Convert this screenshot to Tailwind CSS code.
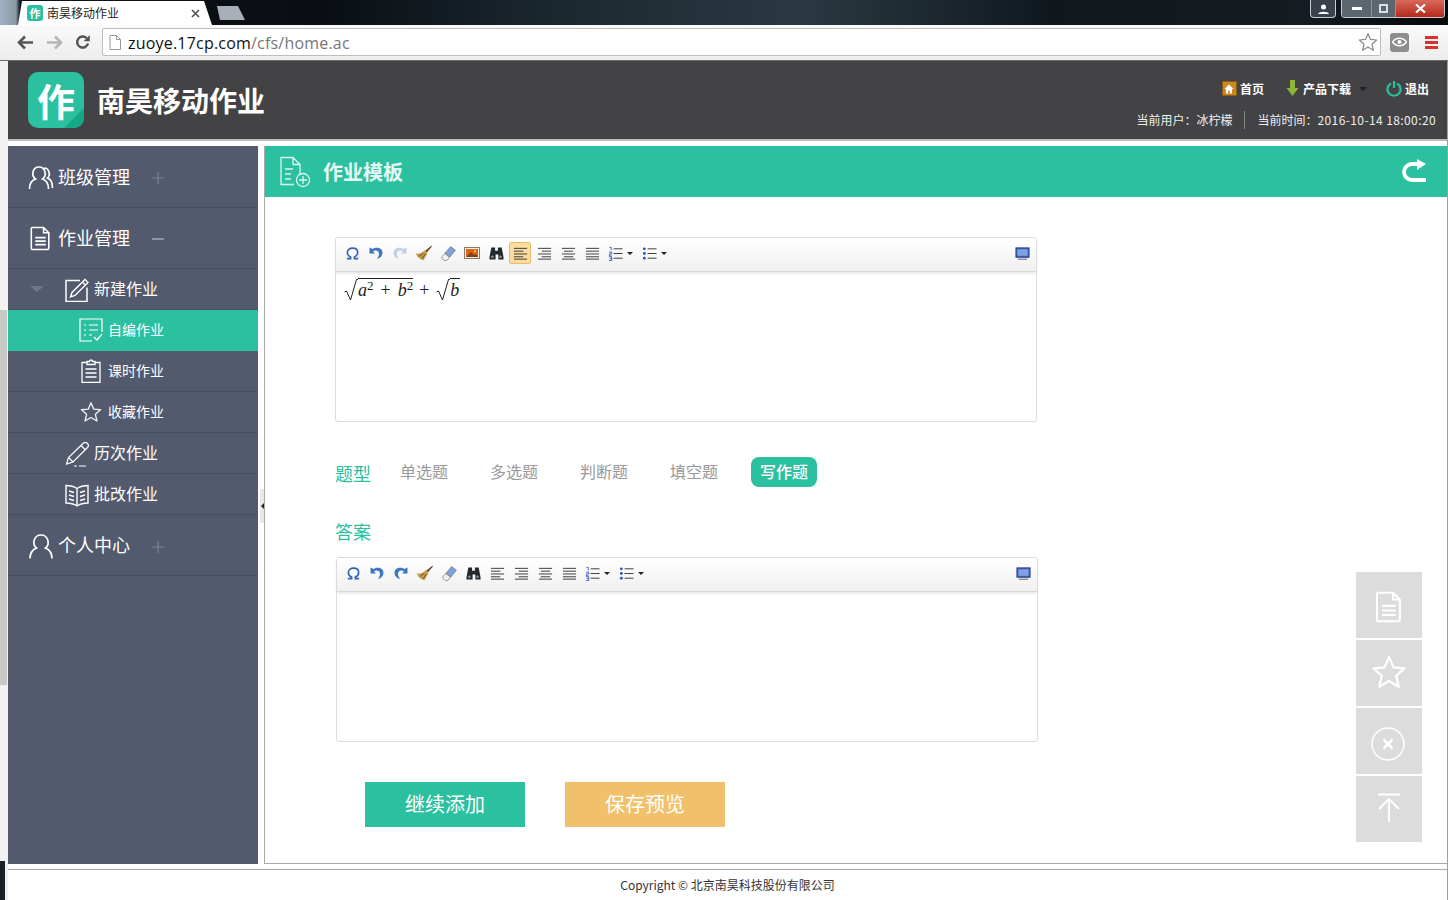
<!DOCTYPE html>
<html lang="zh-CN">
<head>
  <meta charset="UTF-8" />
  <meta name="viewport" content="width=device-width, initial-scale=1" />
  <title>南昊移动作业</title>
  <script src="https://cdn.jsdelivr.net/npm/@tailwindcss/browser@4"></script>
</head>
<body class="relative w-[1448px] h-[900px] overflow-hidden bg-white font-['Noto_Sans_CJK_SC','Noto_Sans',sans-serif]">
  <!-- shared icons -->
  <svg class="hidden">
    <symbol id="i-omega" viewBox="0 0 16 16"><path d="M2 13.500h4v-1.700C3.800 10.800 2.500 9 2.500 6.800 2.500 4 4.800 2.300 8 2.300s5.500 1.700 5.500 4.500c0 2.200-1.300 4-3.500 5v1.700h4" fill="none" stroke="#2f62b5" stroke-width="1.700"/></symbol>
    <symbol id="i-undo" viewBox="0 0 16 16"><path d="M1.500 2.500v6H7L5 6.300c2.500-1.600 6-.3 6 2.400 0 1.900-.8 3.500-2 5.300 3-.8 5.500-3 5.500-6.500C14.500 3 8.500 1.200 4.600 4z" fill="#3c76c4"/></symbol>
    <symbol id="i-redo" viewBox="0 0 16 16"><path d="M14.500 2.500v6H9l2-2.200C8.500 4.700 5 6 5 8.700c0 1.900.8 3.500 2 5.300-3-.8-5.500-3-5.500-6.500C1.500 3 7.500 1.200 11.400 4z" fill="#3c76c4"/></symbol>
    <symbol id="i-broom" viewBox="0 0 16 16"><path d="M9 6 14.500 1.500l.6.700L10.500 7.500z" fill="#6b4a1e"/><path d="M8.500 5.500 11 8.500 7.500 14.500C5 14 2 12 .8 8.500 4 9 6.500 8 8.500 5.500z" fill="#c39a4c"/><path d="M4 11 7 7.800M6.500 13l2.500-4" stroke="#6b4a1e" stroke-width=".8"/></symbol>
    <symbol id="i-eraser" viewBox="0 0 16 16"><path d="M10 1.500 14.500 5 9 11.500 4.500 8z" fill="#7fa3d8" stroke="#5a6a85" stroke-width=".6"/><path d="M4.500 8 9 11.500 6.500 14.500H4L1.800 12.500V11z" fill="#f2f2f2" stroke="#7a7a7a" stroke-width=".7"/></symbol>
    <symbol id="i-image" viewBox="0 0 16 16"><rect x=".5" y="2.500" width="15" height="11" fill="#f7f1e5" stroke="#8a7a66"/><rect x="2" y="4" width="12" height="8" fill="#d9651c"/><path d="M2 12 7 7l3 3 2-1 2 3z" fill="#8d3d10"/><circle cx="11" cy="6" r="1.200" fill="#f6c142"/></symbol>
    <symbol id="i-find" viewBox="0 0 16 16"><path d="M2.500 1.500h4v3.500h3V1.500h4l2 10.500v2.500h-5.500V9h-3v5.500H.500V12z" fill="#23282c"/><circle cx="3.600" cy="11.500" r="1.500" fill="#7a8a94"/><circle cx="12.400" cy="11.500" r="1.500" fill="#7a8a94"/></symbol>
    <symbol id="i-left" viewBox="0 0 16 16"><path d="M1 2.500h14M1 5.500h10M1 8.500h14M1 11.500h10M1 14h14" stroke="#333" stroke-width="1"/></symbol>
    <symbol id="i-right" viewBox="0 0 16 16"><path d="M1 2.500h14M5 5.500h10M1 8.500h14M5 11.500h10M1 14h14" stroke="#333" stroke-width="1"/></symbol>
    <symbol id="i-center" viewBox="0 0 16 16"><path d="M1 2.500h14M3 5.500h10M1 8.500h14M3 11.500h10M1 14h14" stroke="#333" stroke-width="1"/></symbol>
    <symbol id="i-justify" viewBox="0 0 16 16"><path d="M1 2.500h14M1 5.500h14M1 8.500h14M1 11.500h14M1 14h14" stroke="#333" stroke-width="1"/></symbol>
    <symbol id="i-ol" viewBox="0 0 16 16"><path d="M6 3h9.500M6 8h9.500M6 13h9.500" stroke="#333" stroke-width="1"/><path d="M1.500 1.500h2v3M1 6.500h3v2H1.500v2H4M1 11.500h3v4H1M2 13.500h2" fill="none" stroke="#2f52b5" stroke-width=".9"/></symbol>
    <symbol id="i-ul" viewBox="0 0 16 16"><path d="M6 3h9.500M6 8h9.500M6 13h9.500" stroke="#333" stroke-width="1"/><circle cx="2.500" cy="3" r="1.500" fill="#2f52b5"/><circle cx="2.500" cy="8" r="1.500" fill="#2f52b5"/><circle cx="2.500" cy="13" r="1.500" fill="#2f52b5"/></symbol>
    <symbol id="i-full" viewBox="0 0 16 16"><rect x="1" y="2" width="14" height="10" fill="#3c62b8" stroke="#25407f"/><rect x="2.500" y="3.500" width="11" height="7" fill="#7ea2e4"/><path d="M3 13.500h10v1.200H3z" fill="#6d7686"/></symbol>
    <symbol id="i-doc" viewBox="0 0 24 28"><path d="M2.500 1.500h13l6 6v17a2 2 0 0 1-2 2h-17a1 1 0 0 1-1-1v-23a1 1 0 0 1 1-1zM15.500 1.500v6h6M6 13h12M6 17h12M6 21h12" fill="none" stroke="currentColor" stroke-width="1.800"/></symbol>
    <symbol id="i-star" viewBox="0 0 24 24"><path d="M12 2l3 6.900 7.400.7-5.600 4.900 1.700 7.300L12 18l-6.500 3.800 1.700-7.300L1.600 9.600 9 8.900z" fill="none" stroke="currentColor" stroke-width="1.500" stroke-linejoin="round"/></symbol>
    <symbol id="i-plus" viewBox="0 0 12 12"><path d="M6 0v12M0 6h12" stroke="currentColor" stroke-width="1.200"/></symbol>
  </svg>

  <!-- browser tab strip -->
  <div class="flex h-[25px] bg-[linear-gradient(90deg,#9fb1c2_0px,#8b98a4_16px,#0d1319_20px,#0a0e13_320px,#1b2830_560px,#2a3942_800px,#10181e_1050px,#141c22_1300px,#050709_1448px)]">
    <div class="ml-[18px] mt-[1px] w-[194px] h-[24px] flex items-center pl-[9px] pr-[12px] bg-white [clip-path:polygon(4px_0,186px_0,194px_100%,0_100%)]">
      <div class="w-4 h-4 rounded-[3px] bg-[#2bc09f] flex items-center justify-center text-[11px] leading-none text-white font-bold">作</div>
      <span class="ml-[4px] text-[12px] text-[#222]">南昊移动作业</span>
      <svg class="ml-auto w-[9px] h-[9px]" viewBox="0 0 9 9"><path d="M1 1l7 7M8 1L1 8" stroke="#555" stroke-width="1.700"/></svg>
    </div>
    <div class="ml-[2px] mt-[6px] w-[31px] h-[14px] bg-[#a9afb8] [clip-path:polygon(3px_0,24px_0,31px_100%,6px_100%)]"></div>
    <div class="ml-auto flex items-start mr-[3px]">
      <div class="w-[26px] h-[18px] rounded-b-[4px] border border-t-0 border-[#c8ccd0] bg-[#39424a] flex items-center justify-center">
        <svg class="w-[11px] h-[10px]" viewBox="0 0 11 10"><circle cx="5.500" cy="3" r="2.500" fill="#fff"/><path d="M0 10c1-3 10-3 11 0z" fill="#fff"/></svg>
      </div>
      <div class="ml-[5px] w-[104px] h-[18px] rounded-b-[4px] border border-t-0 border-[#c8ccd0] flex overflow-hidden">
        <div class="w-[29px] bg-[#5b666e] flex items-center justify-center"><div class="w-[10px] h-[3px] bg-white"></div></div>
        <div class="w-[25px] bg-[#5b666e] border-x border-[#8b959c] flex items-center justify-center"><div class="w-[9px] h-[9px] border-2 border-[#dde]"></div></div>
        <div class="flex-1 bg-[linear-gradient(#d96a5c,#b5281c)] flex items-center justify-center"><svg class="w-[11px] h-[9px]" viewBox="0 0 11 9"><path d="M1 .5l9 8M10 .5l-9 8" stroke="#fff" stroke-width="2.200"/></svg></div>
      </div>
    </div>
  </div>

  <!-- browser toolbar -->
  <div class="flex items-center h-[36px] pb-[1px] border-b border-[#6b6b6b] bg-[linear-gradient(#fafafa,#ececec)]">
    <svg class="ml-[17px] w-[17px] h-[15px]" viewBox="0 0 17 15"><path d="M16 7.500H3M8 1.500l-6 6 6 6" fill="none" stroke="#555" stroke-width="2.600"/></svg>
    <svg class="ml-[12px] w-[17px] h-[15px]" viewBox="0 0 17 15"><path d="M1 7.500h13M9 1.500l6 6-6 6" fill="none" stroke="#b5b5b5" stroke-width="2.600"/></svg>
    <svg class="ml-[12px] w-[16px] h-[16px]" viewBox="0 0 16 16"><path d="M13 9.500a5.500 5.500 0 1 1-1.400-5.300" fill="none" stroke="#555" stroke-width="2.500"/><path d="M14.800 1v6.200H8.600z" fill="#555"/></svg>
    <div class="ml-[11px] w-[1279px] h-[28px] flex items-center bg-white border border-[#bdbdbd] rounded-[2px]">
      <svg class="ml-[6px] w-[12px] h-[15px]" viewBox="0 0 12 15"><path d="M1 .5h6.500l4 4v10H1zM7.500 .5v4h4" fill="#fff" stroke="#999"/></svg>
      <span class="ml-[7px] pt-[1px] font-['Open_Sans',sans-serif] text-[16px] tracking-[0.2px] text-[#111]">zuoye.17cp.com<span class="text-[#777]">/cfs/home.ac</span></span>
      <svg class="ml-auto mr-[2px] w-[20px] h-[20px] text-[#8a8a8a]"><use href="#i-star"/></svg>
    </div>
    <div class="ml-[9px] w-[19px] h-[19px] rounded-[3px] bg-[#8d8d8d] flex items-center justify-center">
      <svg class="w-[15px] h-[10px]" viewBox="0 0 15 10"><path d="M.5 5C4 0 11 0 14.500 5 11 10 4 10 .5 5z" fill="none" stroke="#fff" stroke-width="1.400"/><circle cx="7.500" cy="5" r="2" fill="#fff"/></svg>
    </div>
    <div class="ml-[16px] w-[13px] flex flex-col gap-[2px]">
      <div class="h-[3px] bg-[#d9302a]"></div><div class="h-[3px] bg-[#d9302a]"></div><div class="h-[3px] bg-[#d9302a]"></div>
    </div>
  </div>

  <div class="flex h-[839px]">
    <!-- page scrollbar -->
    <div class="relative w-2 shrink-0 bg-[#f1f1ef]">
      <div class="absolute left-0 top-[249px] w-[7px] h-[375px] bg-[#c8c8c4]"></div>
      <div class="absolute left-0 bottom-0 w-[5px] h-[39px] bg-[#1a2126]"></div>
    </div>

    <div class="flex-1 flex flex-col min-w-0 border-r border-[#a0a0a0]">
      <!-- header -->
      <header class="h-[80px] shrink-0 flex items-center bg-[#434346] border-b-[2px] border-[#bcbcbc] pl-5 pr-[11px]">
        <div class="relative w-[56px] h-[56px] rounded-[10px] bg-[#2bc09f] overflow-hidden flex items-center justify-center">
          <div class="absolute right-0 bottom-0 w-[20px] h-[20px] bg-[#14a887] [clip-path:polygon(100%_0,100%_100%,0_100%)]"></div>
          <span class="relative text-[38px] leading-none font-bold text-white">作</span>
        </div>
        <h1 class="ml-[13px] text-[28px] leading-none font-bold text-white">南昊移动作业</h1>
        <div class="ml-auto pt-[7px] flex flex-col items-end">
          <div class="flex items-center h-[20px] pr-[7px] text-[13px] font-bold text-white tracking-[-1px]">
            <span class="w-[15px] h-[15px] bg-[#c98a24] border border-[#8b5c12] flex items-center justify-center">
              <svg class="w-[10px] h-[10px]" viewBox="0 0 10 10"><path d="M5 .5L.5 5H2v4.500h2.200V6.500h1.600v3H8V5h1.500z" fill="#fff"/></svg>
            </span>
            <span class="ml-[3px] tracking-normal text-[12px]">首页</span>
            <svg class="ml-[22px] w-[13px] h-[17px]" viewBox="0 0 13 17"><path d="M4 0h5v8h3.500L6.500 16 .5 8H4z" fill="#8fb43a"/></svg>
            <span class="ml-[4px] tracking-normal text-[12px]">产品下载</span>
            <span class="ml-[8px] w-0 h-0 border-x-[4px] border-t-[4px] border-x-transparent border-t-[#222]"></span>
            <svg class="ml-[19px] w-[16px] h-[17px]" viewBox="0 0 16 17"><path d="M5 3.500a6.500 6.500 0 1 0 6 0M8 1v7" fill="none" stroke="#2bc09f" stroke-width="2.200"/></svg>
            <span class="ml-[3px] tracking-normal text-[12px]">退出</span>
          </div>
          <div class="mt-[12px] flex items-center h-[18px] text-[12px] text-[#eee]">
            <span>当前用户：冰柠檬</span>
            <span class="mx-3 w-px h-[18px] bg-[#8a8a8a]"></span>
            <span>当前时间：<span class="tracking-[0.4px]">2016-10-14 18:00:20</span></span>
          </div>
        </div>
      </header>

      <div class="flex-1 flex min-h-0 pt-[5px]">
        <!-- sidebar -->
        <aside class="w-[250px] shrink-0 bg-[#535a6e] text-white [&>div]:border-b [&>div]:border-[#474e60]">
          <div class="h-[62px] flex items-center pl-5">
            <svg class="w-[26px] h-[24px] mt-[2px]" viewBox="0 0 26 24"><path d="M1.500 23c0-6 3-9 6-10-5-4-2.500-12 3.500-12s8.500 8 3.500 12c3 1 6 4 6 10M16 2c5 0 7 7 3.500 10 3 1 5 5 5 10" fill="none" stroke="#fff" stroke-width="1.700"/></svg>
            <span class="ml-[4px] w-[72px] pb-[2px] text-[18px] leading-none">班级管理</span>
            <svg class="ml-[22px] mt-[2px] w-3 h-3 text-[#7c8395]"><use href="#i-plus"/></svg>
          </div>
          <div class="h-[61px] flex items-center pl-[22px]">
            <svg class="w-[21px] h-[25px] text-white"><use href="#i-doc"/></svg>
            <span class="ml-[7px] w-[72px] pb-[2px] text-[18px] leading-none">作业管理</span>
            <span class="ml-[22px] mt-[2px] w-3 h-[1.500px] bg-[#8d94a5]"></span>
          </div>
          <div class="h-[41px] flex items-center pl-[22px]">
            <span class="w-0 h-0 border-x-[7px] border-t-[6px] border-x-transparent border-t-[#6f7688]"></span>
            <svg class="ml-[21px] w-[24px] h-[24px] mt-[2px]" viewBox="0 0 24 24"><path d="M15 2.500H1v21h21v-14" fill="none" stroke="#fff" stroke-width="1.500"/><path d="M20 1.500 23 4.500 10 17.500 5.500 19 7 14.500zM17.500 4l3 3" fill="none" stroke="#fff" stroke-width="1.400"/></svg>
            <span class="ml-[5px] pb-[2px] text-[16px] leading-none">新建作业</span>
          </div>
          <div class="h-[41px] flex items-center pl-[71px] bg-[#2bc09f] !border-[#2bc09f]">
            <svg class="w-[24px] h-[24px]" viewBox="0 0 24 24"><path d="M23 14V1H1v22h12M5 7h2M10 7h9M5 12h2M10 12h9M5 17h2M10 17h3M15 19l3 3 5-6" fill="none" stroke="#fff" stroke-width="1.200"/></svg>
            <span class="ml-[5px] pb-[3px] text-[14px] leading-none">自编作业</span>
          </div>
          <div class="h-[41px] flex items-center pl-[73px]">
            <svg class="w-[20px] h-[24px]" viewBox="0 0 20 24"><path d="M6 3.500H1v20h18v-20h-5M6 5.500V2.500h2.500a1.500 1.500 0 0 1 3 0H14v3zM4.500 10h11M4.500 14h11M4.500 18h11" fill="none" stroke="#fff" stroke-width="1.300"/></svg>
            <span class="ml-[7px] pb-[3px] text-[14px] leading-none">课时作业</span>
          </div>
          <div class="h-[41px] flex items-center pl-[72px]">
            <svg class="w-[22px] h-[22px] text-[#eef0f4]"><use href="#i-star"/></svg>
            <span class="ml-[6px] pb-[3px] text-[14px] leading-none">收藏作业</span>
          </div>
          <div class="h-[41px] flex items-center pl-[56px]">
            <svg class="w-[25px] h-[25px] mt-[3px]" viewBox="0 0 25 25"><path d="M19 1.500a3 3 0 0 1 4.500 4L9 20l-6.500 2L4.500 15.500zM17 3.500l4.500 4.500M4.500 15.500 9 20M10 24h3M15 24h7" fill="none" stroke="#fff" stroke-width="1.200"/></svg>
            <span class="ml-[5px] pb-[2px] text-[16px] leading-none">历次作业</span>
          </div>
          <div class="h-[41px] flex items-center pl-[57px]">
            <svg class="w-[24px] h-[24px] mt-[2px]" viewBox="0 0 24 24"><path d="M12 5.500C9 3.500 5 2.500 1 2.500V20c4 0 8 1 11 3 3-2 7-3 11-3V2.500c-4 0-8 1-11 3zM12 5.500V23M4 8l5 1.500M4 12l5 1.500M4 16l5 1.500M20 8l-5 1.500M20 12l-5 1.500M20 16l-5 1.500" fill="none" stroke="#fff" stroke-width="1.400"/></svg>
            <span class="ml-[5px] pb-[2px] text-[16px] leading-none">批改作业</span>
          </div>
          <div class="h-[61px] flex items-center pl-[21px]">
            <svg class="w-[24px] h-[25px] mt-[2px]" viewBox="0 0 24 25"><path d="M1 24.500c0-6 3-9 6.500-10.500-5-4-2.500-13 4.500-13s9.500 9 4.500 13c3.500 1.500 6.500 4.500 6.500 10.500" fill="none" stroke="#fff" stroke-width="1.700"/></svg>
            <span class="ml-[5px] w-[72px] pb-[2px] text-[18px] leading-none">个人中心</span>
            <svg class="ml-[22px] mt-[3px] w-3 h-3 text-[#7c8395]"><use href="#i-plus"/></svg>
          </div>
        </aside>

        <div class="w-[7px] shrink-0 bg-white border-r border-[#a8a8a8]"></div>

        <!-- content -->
        <main class="flex-1 min-w-0 border-b border-[#a8a8a8]">
          <div class="h-[51px] flex items-center pl-[15px] pr-[20px] bg-[#2bc09f] text-white">
            <svg class="w-[30px] h-[32px]" viewBox="0 0 30 32"><path d="M14 28.500H1V1.500h12l7 7V18M13 1.500v7h7M5 13h8M5 18h6M5 23h6" fill="none" stroke="#d8f5ee" stroke-width="1.300"/><circle cx="23" cy="24" r="6.500" fill="none" stroke="#d8f5ee" stroke-width="1.300"/><path d="M23 20v8M19 24h8" stroke="#d8f5ee" stroke-width="1.300"/></svg>
            <h2 class="ml-[13px] pt-[1px] text-[20px] font-bold leading-none text-[#e6f8f4]">作业模板</h2>
            <svg class="ml-auto mb-[2px] w-[26px] h-[24px]" viewBox="0 0 26 24"><path d="M25 21H11a8 8 0 0 1 0-16h7" fill="none" stroke="#fff" stroke-width="3.800"/><path d="M16 0l9 5-9 6z" fill="#fff"/></svg>
          </div>

          <div class="pl-[70px] pt-[40px]">
            <!-- first editor -->
            <div class="w-[702px] h-[185px] border border-[#dcdcdc] rounded-[3px] bg-white">
              <div class="h-[34px] flex items-center pl-1 pr-[6px] pb-[3px] border-b border-[#d8d8d8] shadow-[0_1px_3px_#ddd] bg-[linear-gradient(#fff,#f0f0f0)]">
                <span class="w-6 flex justify-center"><svg class="w-[15px] h-[15px]"><use href="#i-omega"/></svg></span>
                <span class="w-6 flex justify-center"><svg class="w-[16px] h-[16px]"><use href="#i-undo"/></svg></span>
                <span class="w-6 flex justify-center opacity-30"><svg class="w-[16px] h-[16px]"><use href="#i-redo"/></svg></span>
                <span class="w-6 flex justify-center"><svg class="w-[18px] h-[18px]"><use href="#i-broom"/></svg></span>
                <span class="w-6 flex justify-center"><svg class="w-[17px] h-[17px]"><use href="#i-eraser"/></svg></span>
                <span class="w-6 flex justify-center"><svg class="w-[16px] h-[16px]"><use href="#i-image"/></svg></span>
                <span class="w-6 flex justify-center"><svg class="w-[15px] h-[15px]"><use href="#i-find"/></svg></span>
                <span class="w-[22px] h-[22px] ml-px mr-px flex items-center justify-center bg-[#fbdc9e] border border-[#e8bd6c] rounded-[2px]"><svg class="w-[15px] h-[15px]"><use href="#i-left"/></svg></span>
                <span class="w-6 flex justify-center"><svg class="w-[15px] h-[15px]"><use href="#i-right"/></svg></span>
                <span class="w-6 flex justify-center"><svg class="w-[15px] h-[15px]"><use href="#i-center"/></svg></span>
                <span class="w-6 flex justify-center"><svg class="w-[15px] h-[15px]"><use href="#i-justify"/></svg></span>
                <span class="w-[34px] flex items-center pl-[4px]"><svg class="w-[15px] h-[15px]"><use href="#i-ol"/></svg><span class="ml-[4px] border-x-[3px] border-t-[3px] border-x-transparent border-t-[#222]"></span></span>
                <span class="w-[34px] flex items-center pl-[4px]"><svg class="w-[15px] h-[15px]"><use href="#i-ul"/></svg><span class="ml-[4px] border-x-[3px] border-t-[3px] border-x-transparent border-t-[#222]"></span></span>
                <svg class="ml-auto w-[15px] h-[15px]"><use href="#i-full"/></svg>
              </div>
              <div class="flex items-end pt-[6px] pl-[8px] font-['Liberation_Serif',serif] text-[18px] leading-[22px] text-[#222]">
                <svg class="w-[14px] h-[22px] shrink-0" viewBox="0 0 14 22"><path d="M.5 13l2-1 4 9 6-20.500h1.500" fill="none" stroke="#222" stroke-width="1"/></svg>
                <span class="flex border-t border-[#222] italic"><span>a</span><span class="text-[13px] leading-[14px] not-italic">2</span><span class="mx-[7px] not-italic">+</span><span>b</span><span class="text-[13px] leading-[14px] not-italic">2</span></span>
                <span class="ml-[6px] mr-[7px]">+</span>
                <svg class="w-[14px] h-[22px] shrink-0" viewBox="0 0 14 22"><path d="M.5 13l2-1 4 9 6-20.500h1.500" fill="none" stroke="#222" stroke-width="1"/></svg>
                <span class="border-t border-[#222] italic pr-[1px]">b</span>
              </div>
            </div>

            <!-- question type -->
            <div class="mt-[35px] flex items-center h-[30px]">
              <span class="w-[36px] mr-[20px] pt-[2px] text-[18px] leading-none text-[#2bc09f]">题型</span>
              <div class="flex gap-6 text-[16px] leading-none text-[#999]">
                <span class="w-[66px] h-[30px] pb-[2px] flex items-center justify-center">单选题</span>
                <span class="w-[66px] h-[30px] pb-[2px] flex items-center justify-center">多选题</span>
                <span class="w-[66px] h-[30px] pb-[2px] flex items-center justify-center">判断题</span>
                <span class="w-[66px] h-[30px] pb-[2px] flex items-center justify-center">填空题</span>
                <span class="w-[66px] h-[30px] pb-[2px] flex items-center justify-center rounded-lg bg-[#2bc09f] text-white font-medium">写作题</span>
              </div>
            </div>

            <div class="mt-[32px] h-[24px] flex items-center text-[18px] leading-none text-[#2bc09f]">答案</div>

            <!-- answer editor -->
            <div class="mt-[14px] ml-px w-[702px] h-[185px] border border-[#dcdcdc] rounded-[3px] bg-white">
              <div class="h-[34px] flex items-center pl-1 pr-[6px] pb-[3px] border-b border-[#d8d8d8] shadow-[0_1px_3px_#ddd] bg-[linear-gradient(#fff,#f0f0f0)]">
                <span class="w-6 flex justify-center"><svg class="w-[15px] h-[15px]"><use href="#i-omega"/></svg></span>
                <span class="w-6 flex justify-center"><svg class="w-[16px] h-[16px]"><use href="#i-undo"/></svg></span>
                <span class="w-6 flex justify-center"><svg class="w-[16px] h-[16px]"><use href="#i-redo"/></svg></span>
                <span class="w-6 flex justify-center"><svg class="w-[18px] h-[18px]"><use href="#i-broom"/></svg></span>
                <span class="w-6 flex justify-center"><svg class="w-[17px] h-[17px]"><use href="#i-eraser"/></svg></span>
                <span class="w-6 flex justify-center"><svg class="w-[15px] h-[15px]"><use href="#i-find"/></svg></span>
                <span class="w-6 flex justify-center"><svg class="w-[15px] h-[15px]"><use href="#i-left"/></svg></span>
                <span class="w-6 flex justify-center"><svg class="w-[15px] h-[15px]"><use href="#i-right"/></svg></span>
                <span class="w-6 flex justify-center"><svg class="w-[15px] h-[15px]"><use href="#i-center"/></svg></span>
                <span class="w-6 flex justify-center"><svg class="w-[15px] h-[15px]"><use href="#i-justify"/></svg></span>
                <span class="w-[34px] flex items-center pl-[4px]"><svg class="w-[15px] h-[15px]"><use href="#i-ol"/></svg><span class="ml-[4px] border-x-[3px] border-t-[3px] border-x-transparent border-t-[#222]"></span></span>
                <span class="w-[34px] flex items-center pl-[4px]"><svg class="w-[15px] h-[15px]"><use href="#i-ul"/></svg><span class="ml-[4px] border-x-[3px] border-t-[3px] border-x-transparent border-t-[#222]"></span></span>
                <svg class="ml-auto w-[15px] h-[15px]"><use href="#i-full"/></svg>
              </div>
            </div>

            <div class="mt-[40px] ml-[30px] flex gap-10 text-[20px] leading-none text-white">
              <button class="w-[160px] h-[45px] pb-[2px] bg-[#2bc09f]">继续添加</button>
              <button class="w-[160px] h-[45px] pb-[2px] bg-[#f0c06a]">保存预览</button>
            </div>
          </div>
        </main>
      </div>

      <footer class="h-[31px] shrink-0 mt-[5px] border-t border-[#a8a8a8] flex items-center justify-center text-[12px] text-[#333]">
        <span>Copyright © 北京南昊科技股份有限公司</span>
      </footer>
    </div>
  </div>

  <!-- sidebar collapse handle -->
  <div class="absolute left-[260px] top-[489px] w-[4px] h-[34px] bg-[#e8e8e8] flex items-center justify-center">
    <span class="border-y-[3px] border-r-[3px] border-y-transparent border-r-[#222]"></span>
  </div>

  <!-- floating buttons -->
  <div class="absolute left-[1356px] top-[572px] w-[66px] flex flex-col gap-[2px] text-white">
    <div class="h-[66px] bg-[#dcdcdc] flex items-center justify-center"><svg class="w-[28px] h-[32px] mt-[3px]"><use href="#i-doc"/></svg></div>
    <div class="h-[66px] bg-[#dcdcdc] flex items-center justify-center"><svg class="w-[36px] h-[36px] -mt-[2px] -ml-[1px]"><use href="#i-star"/></svg></div>
    <div class="h-[66px] bg-[#dcdcdc] flex items-center justify-center">
      <svg class="w-[34px] h-[34px] mt-[6px] mr-[3px]" viewBox="0 0 34 34"><circle cx="17" cy="17" r="16" fill="none" stroke="#fff" stroke-width="1.500"/><path d="M12.500 12.500l9 9M21.500 12.500l-9 9" stroke="#fff" stroke-width="2.500"/></svg>
    </div>
    <div class="h-[66px] bg-[#dcdcdc] flex items-center justify-center">
      <svg class="w-[24px] h-[30px] -mt-[2px]" viewBox="0 0 24 30"><path d="M1 1.500h22M12 29V6M2 16 12 6l10 10" fill="none" stroke="#fff" stroke-width="1.800"/></svg>
    </div>
  </div>
</body>
</html>
